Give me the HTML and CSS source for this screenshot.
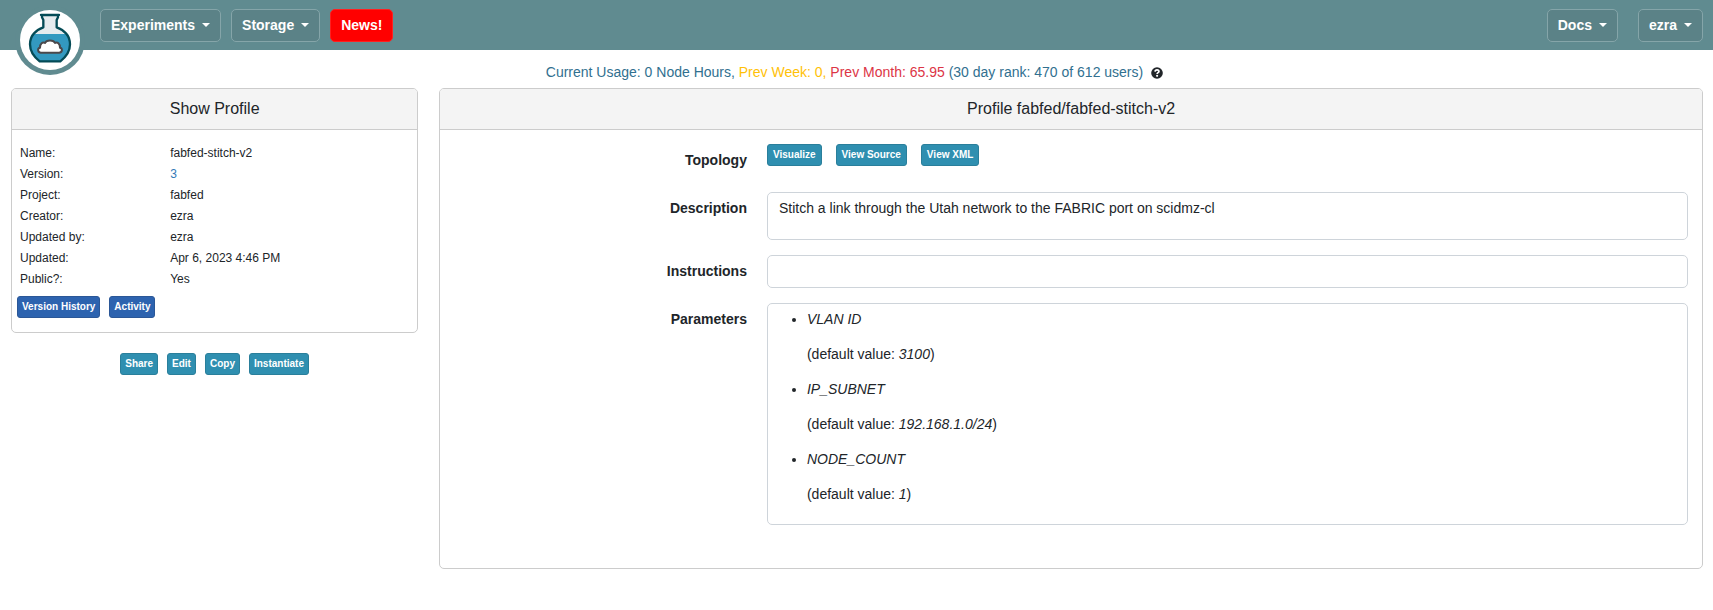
FILE: index.html
```html
<!DOCTYPE html>
<html lang="en">
<head>
<meta charset="utf-8">
<meta name="viewport" content="width=device-width, initial-scale=1">
<title>Show Profile</title>
<link rel="stylesheet" href="styles.css">
</head>
<body>
<header class="navbar">
  <a class="logo" href="#" aria-label="Home">
    <svg viewBox="0 0 210 210" aria-hidden="true">
      <circle cx="105" cy="105" r="105" fill="#608b90"/>
      <circle cx="105" cy="105" r="90" fill="#fff"/>
      <path d="M83 31h44v32l3 8c18 7 34 24 34 48 0 22-12 36-27 49H73c-16-13-27-27-27-49 0-24 16-41 34-48l3-8z" fill="#e6ebee"/>
      <path d="M51 87h108c4 8 5 18 5 30 0 22-12 38-27 51H73c-16-13-27-29-27-51 0-12 1-22 5-30z" fill="#3399c0"/>
      <path d="M78 30h54M81 31v6l4 8v22c-24 8-40 27-40 51 0 22 12 38 29 51h62c17-13 29-29 29-51 0-24-16-43-40-51V45l4-8v-6" fill="none" stroke="#044b56" stroke-width="7" stroke-linejoin="round" stroke-linecap="round"/>
      <path d="M77 143c-11-2-9-14-2-15 0-12 8-18 15-14 4-10 26-10 30 0 7-4 15 2 15 14 7 1 9 13-2 15z" fill="#fff" stroke="#4b484b" stroke-width="6" stroke-linejoin="round"/>
    </svg>
  </a>
  <nav class="menu">
    <button class="nav-btn" type="button">Experiments<span class="caret"></span></button>
    <button class="nav-btn" type="button">Storage<span class="caret"></span></button>
    <button class="nav-btn news" type="button">News!</button>
  </nav>
  <nav class="menu menu-right">
    <button class="nav-btn" type="button">Docs<span class="caret"></span></button>
    <button class="nav-btn" type="button">ezra<span class="caret"></span></button>
  </nav>
</header>

<div class="usage">
  <span>Current Usage: 0 Node Hours, <span class="week">Prev Week: 0,</span> <span class="month">Prev Month: 65.95</span> (30 day rank: 470 of 612 users)</span>
  <a class="help" href="#" aria-label="Usage help">
    <svg viewBox="0 0 512 512" aria-hidden="true">
      <circle cx="256" cy="256" r="248" fill="#212529"/>
      <path d="M172 196c6-56 44-78 84-78 46 0 82 28 82 70 0 54-76 50-76 108" fill="none" stroke="#fff" stroke-width="74"/>
      <circle cx="260" cy="376" r="46" fill="#fff"/>
    </svg>
  </a>
</div>

<main class="columns">
  <section class="column">
    <div class="card">
      <h1 class="card-header">Show Profile</h1>
      <div class="profile">
        <table class="details">
          <tr><th scope="row">Name:</th><td>fabfed-stitch-v2</td></tr>
          <tr><th scope="row">Version:</th><td><a href="#">3</a></td></tr>
          <tr><th scope="row">Project:</th><td>fabfed</td></tr>
          <tr><th scope="row">Creator:</th><td>ezra</td></tr>
          <tr><th scope="row">Updated by:</th><td>ezra</td></tr>
          <tr><th scope="row">Updated:</th><td>Apr 6, 2023 4:46 PM</td></tr>
          <tr><th scope="row">Public?:</th><td>Yes</td></tr>
        </table>
        <div class="buttons">
          <button class="btn primary" type="button">Version History</button>
          <button class="btn primary" type="button">Activity</button>
        </div>
      </div>
    </div>
    <div class="buttons actions">
      <button class="btn" type="button">Share</button>
      <button class="btn" type="button">Edit</button>
      <button class="btn" type="button">Copy</button>
      <button class="btn" type="button">Instantiate</button>
    </div>
  </section>

  <section class="column">
    <div class="card">
      <h2 class="card-header">Profile fabfed/fabfed-stitch-v2</h2>
      <div class="form">
        <div class="row topology">
          <div class="label">Topology</div>
          <div class="buttons wide">
            <button class="btn" type="button">Visualize</button>
            <button class="btn" type="button">View Source</button>
            <button class="btn" type="button">View XML</button>
          </div>
        </div>
        <div class="row">
          <div class="label">Description</div>
          <div class="field"><p class="text">Stitch a link through the Utah network to the FABRIC port on scidmz-cl</p></div>
        </div>
        <div class="row">
          <div class="label">Instructions</div>
          <div class="field"></div>
        </div>
        <div class="row">
          <div class="label">Parameters</div>
          <div class="field">
            <ul class="params">
              <li><p><em>VLAN ID</em></p><p>(default value: <em>3100</em>)</p></li>
              <li><p><em>IP_SUBNET</em></p><p>(default value: <em>192.168.1.0/24</em>)</p></li>
              <li><p><em>NODE_COUNT</em></p><p>(default value: <em>1</em>)</p></li>
            </ul>
          </div>
        </div>
      </div>
    </div>
  </section>
</main>
</body>
</html>
```
FILE: styles.css
```css
* {
  box-sizing: border-box;
}

body {
  margin: 0;
  background: #fff;
  color: #212529;
  font: 14px/21px "Liberation Sans", Arial, sans-serif;
}

a {
  color: #337ab7;
  text-decoration: none;
}

button {
  font-family: inherit;
  font-weight: bold;
  color: #fff;
  cursor: pointer;
}

/* Top bar */
.navbar {
  display: flex;
  align-items: flex-start;
  gap: 15px;
  height: 50px;
  padding: 0 10px 0 15px;
  background: #608b90;
}

.logo {
  width: 70px;
  height: 70px;
  margin-top: 5px;
  flex: none;
}

.logo svg,
.help svg {
  display: block;
  width: 100%;
}

.menu {
  display: flex;
  gap: 10px;
  padding-top: 9px;
}

.menu-right {
  gap: 20px;
  margin-left: auto;
}

.nav-btn {
  display: flex;
  align-items: center;
  gap: 7px;
  padding: 5px 10px;
  border: 1px solid #85a5a9;
  border-radius: 5px;
  background: #5b8287;
  font-size: 14px;
  line-height: 21px;
}

.news {
  background: #f00;
  border-color: #ff2020;
}

.caret {
  border: 4px solid transparent;
  border-top-color: #fff;
  border-bottom: 0;
  margin-bottom: 2px;
}

/* Usage summary */
.usage {
  display: flex;
  align-items: center;
  justify-content: center;
  gap: 8px;
  padding: 12px 4px 5px 0;
  color: #31708f;
}

.week {
  color: #ffc107;
}

.month {
  color: #dc3545;
}

.help {
  width: 12px;
}

/* Cards */
.columns {
  display: grid;
  grid-template-columns: 1fr 3fr;
}

.column {
  padding: 0 10px 30px 11px;
}

.card {
  border: 1px solid #ccc;
  border-radius: 5px;
  overflow: hidden;
}

.card-header {
  margin: 0;
  padding: 8px;
  border-bottom: 1px solid #ccc;
  background: #f4f4f4;
  font-size: 16px;
  font-weight: normal;
  line-height: 24px;
  text-align: center;
}

.profile {
  padding: 13px 5px 14px;
}

.details {
  width: 100%;
  border-collapse: collapse;
  margin-bottom: 6px;
  font-size: 12px;
}

.details th,
.details td {
  padding: 0 3px;
  font-weight: normal;
  line-height: 21px;
  text-align: left;
}

.details th {
  width: 38%;
}

/* Buttons */
.buttons {
  display: flex;
  align-items: flex-start;
  gap: 9px;
}

.actions {
  justify-content: center;
  padding-top: 20px;
}

.btn {
  padding: 2px 4px;
  border: 1px solid #2a7f9b;
  border-radius: 3px;
  background: #2f8fb0;
  font-size: 10px;
  line-height: 16px;
}

.primary {
  border-color: #2b5797;
  background: #2d63af;
}

.wide {
  gap: 14px;
}

.wide .btn {
  padding: 2px 5px;
}

/* Profile form */
.form {
  display: grid;
  gap: 15px;
  padding: 14px 4px 43px 3px;
}

.row {
  display: grid;
  grid-template-columns: 1fr 3fr;
}

.row > * {
  margin: 0 10px;
}

.topology {
  padding-bottom: 6px;
}

.label {
  padding-top: 6px;
  font-weight: bold;
  text-align: right;
}

.field {
  min-height: 33px;
  padding: 5px 11px;
  border: 1px solid #ced4da;
  border-radius: 5px;
}

.text {
  margin: 0 0 15px;
}

.params {
  margin: 0 0 1px;
  padding-left: 28px;
}

.params p {
  margin: 0 0 14px;
}
```
